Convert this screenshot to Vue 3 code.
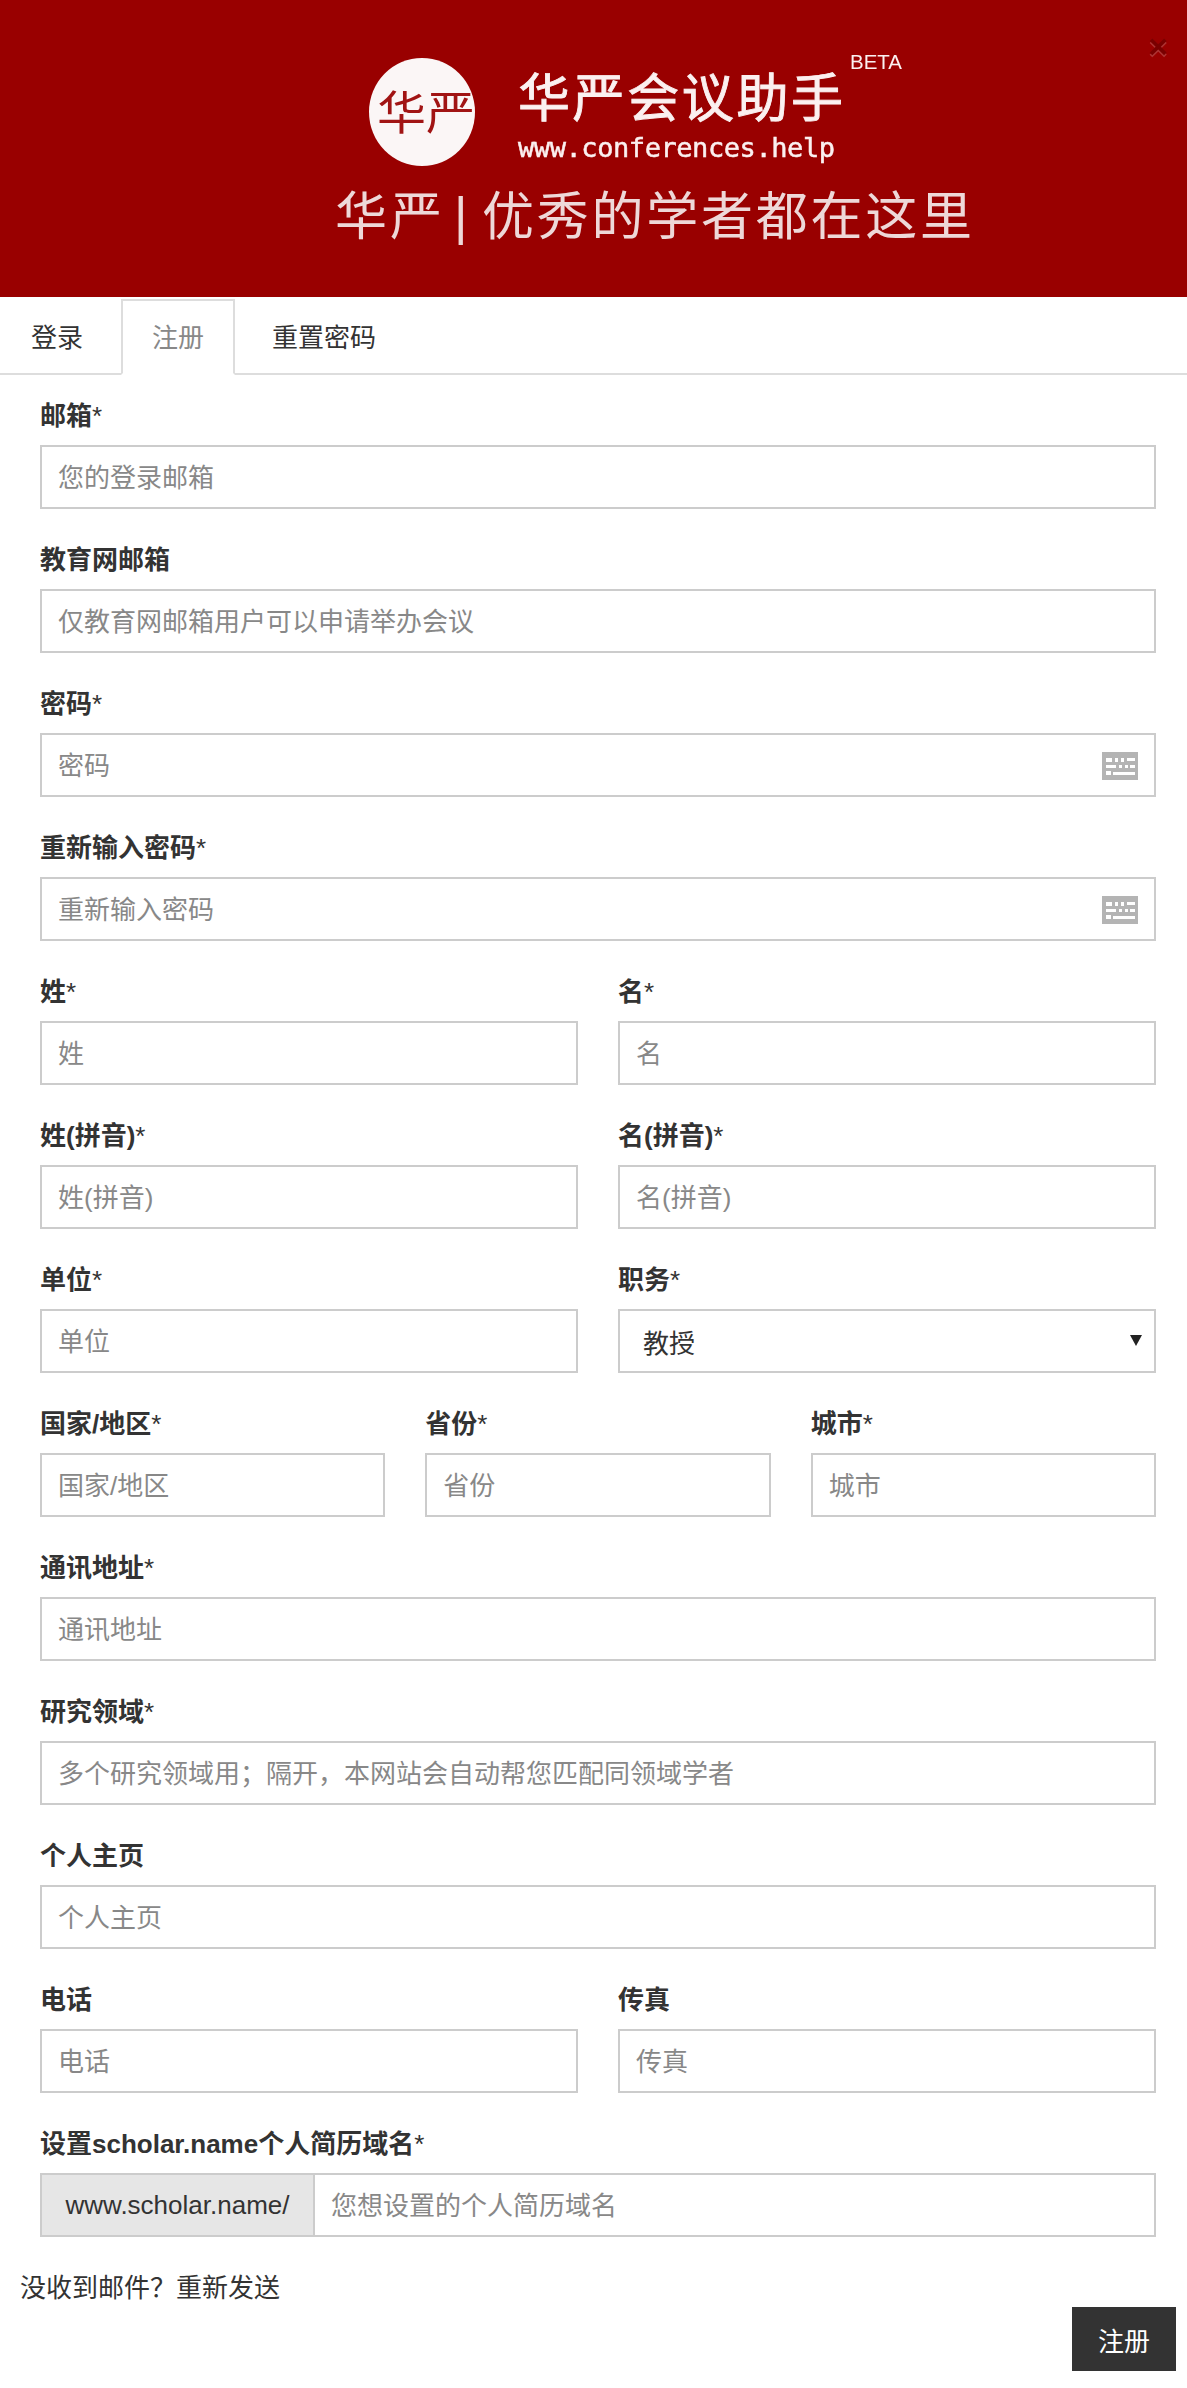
<script setup>
const fullRow = (label, placeholder) => ({ label, placeholder })
const rows = [
  [fullRow('邮箱*', '您的登录邮箱')],
  [fullRow('教育网邮箱', '仅教育网邮箱用户可以申请举办会议')],
  [{ label: '密码*', placeholder: '密码', key: true }],
  [{ label: '重新输入密码*', placeholder: '重新输入密码', key: true }],
  [fullRow('姓*', '姓'), fullRow('名*', '名')],
  [fullRow('姓(拼音)*', '姓(拼音)'), fullRow('名(拼音)*', '名(拼音)')],
  [fullRow('单位*', '单位'), { label: '职务*', select: ['教授', '副教授', '讲师', '研究员', '学生'] }],
  [fullRow('国家/地区*', '国家/地区'), fullRow('省份*', '省份'), fullRow('城市*', '城市')],
  [fullRow('通讯地址*', '通讯地址')],
  [fullRow('研究领域*', '多个研究领域用；隔开，本网站会自动帮您匹配同领域学者')],
  [fullRow('个人主页', '个人主页')],
  [fullRow('电话', '电话'), fullRow('传真', '传真')],
]
const bare = (label) => label.replace('*', '')
const required = (label) => label.endsWith('*')
</script>

<template>
  <div class="page">
    <header class="banner">
      <svg class="logo" viewBox="0 0 700 200" width="700" height="200" role="img" aria-label="华严会议助手">
        <ellipse cx="122" cy="55" rx="53" ry="54" fill="#fbf6f6" />
        <text x="77" y="72" class="seal" textLength="98" lengthAdjust="spacingAndGlyphs">华严</text>
        <text x="218" y="60" class="title" textLength="325" lengthAdjust="spacing">华严会议助手</text>
        <text x="218" y="100" class="url" textLength="317" lengthAdjust="spacing">www.conferences.help</text>
        <text x="550" y="12" class="beta" textLength="52" lengthAdjust="spacingAndGlyphs">BETA</text>
        <text x="35" y="178" class="slogan" textLength="107" lengthAdjust="spacing">华严</text>
        <text x="154" y="177" class="slogan">|</text>
        <text x="182" y="178" class="slogan" textLength="490" lengthAdjust="spacing">优秀的学者都在这里</text>
      </svg>
      <button class="close" type="button" aria-label="关闭">×</button>
    </header>

    <nav class="tabs">
      <a class="tab">登录</a>
      <a class="tab active">注册</a>
      <a class="tab">重置密码</a>
    </nav>

    <form class="form" @submit.prevent>
      <div v-for="(row, i) in rows" :key="i" class="row">
        <div v-for="field in row" :key="field.label" class="field">
          <label class="label">{{ bare(field.label) }}<span v-if="required(field.label)" class="req">*</span></label>
          <div v-if="field.select" class="control">
            <select class="input select">
              <option v-for="o in field.select" :key="o">{{ o }}</option>
            </select>
            <svg class="arrow" viewBox="0 0 12 12" width="12" height="12"><path d="M0 1h12L6 12z" fill="#222" /></svg>
          </div>
          <div v-else class="control">
            <input class="input" :type="field.key ? 'password' : 'text'" :placeholder="field.placeholder" />
            <svg v-if="field.key" class="kbd" viewBox="0 0 36 28" width="36" height="28">
              <rect width="36" height="28" fill="#b4b4b4" />
              <g fill="#fff">
                <rect x="4" y="6" width="6" height="4" />
                <rect x="13" y="6" width="3" height="4" />
                <rect x="19" y="6" width="3" height="4" />
                <rect x="25" y="6" width="8" height="3" />
                <rect x="4" y="13" width="10" height="3" />
                <rect x="17" y="13" width="3" height="3" />
                <rect x="23" y="13" width="3" height="3" />
                <rect x="28" y="13" width="5" height="3" />
                <rect x="4" y="19" width="5" height="4" />
                <rect x="11" y="20" width="22" height="3" />
              </g>
            </svg>
          </div>
        </div>
      </div>

      <div class="field">
        <label class="label">设置scholar.name个人简历域名<span class="req">*</span></label>
        <div class="group">
          <span class="addon">www.scholar.name/</span>
          <input class="input joined" type="text" placeholder="您想设置的个人简历域名" />
        </div>
      </div>
    </form>

    <p class="resend">没收到邮件？重新发送</p>
    <div class="actions">
      <button class="submit" type="button">注册</button>
    </div>
  </div>
</template>

<style>
html, body { background: #fff; }
</style>

<style scoped>
.page {
  width: 1187px;
  font-family: "Liberation Sans", "Noto Sans CJK SC", sans-serif;
  font-size: 26px;
  color: #333;
  background: #fff;
}
.banner {
  position: relative;
  height: 297px;
  background: #990000;
  display: flex;
  justify-content: center;
  padding-top: 57px;
  box-sizing: border-box;
}
.logo {
  display: block;
  margin-left: 112px;
  overflow: visible;
  filter: blur(0.6px);
}
.logo text { font-family: "Liberation Sans", "Noto Sans CJK SC", sans-serif; fill: #fbf0f0; }
.logo .seal { font-size: 46px; fill: #a11414; }
.logo .title { font-size: 52px; stroke: #fbf0f0; stroke-width: 0.9px; }
.logo .url { font-size: 27px; font-family: "DejaVu Sans Mono", "Liberation Mono", monospace; stroke: #fbf0f0; stroke-width: 0.5px; }
.logo .beta { font-size: 20px; }
.logo .slogan { font-size: 52px; fill: #eed8d8; }
.close {
  position: absolute;
  top: 26px;
  right: 19px;
  padding: 0;
  border: 0;
  background: none;
  font: 700 34px/40px "Liberation Sans", sans-serif;
  color: #000;
  text-shadow: 0 2px 0 #fff;
  opacity: 0.2;
}
.tabs {
  display: flex;
  height: 78px;
  padding-top: 2px;
  box-sizing: border-box;
  border-bottom: 2px solid #ddd;
}
.tab {
  height: 76px;
  line-height: 74px;
  padding: 0 29px;
  margin-right: 7px;
  border: 2px solid transparent;
  box-sizing: border-box;
  color: #333;
}
.tab.active {
  color: #888;
  background: #fff;
  border-color: #ddd #ddd #fff;
  margin-right: 6px;
}
.form {
  padding: 24px 31px 0 40px;
  display: flex;
  flex-direction: column;
  gap: 34px;
}
.row {
  display: flex;
  gap: 40px;
}
.field {
  flex: 1 1 0;
  min-width: 0;
}
.label {
  display: block;
  height: 36px;
  line-height: 34px;
  margin-bottom: 10px;
  font-weight: 700;
  color: #333;
}
.req {
  font-weight: 400;
}
.control {
  position: relative;
}
.input {
  display: block;
  width: 100%;
  height: 64px;
  padding: 2px 16px 0;
  border: 2px solid #ccc;
  border-radius: 0;
  background: #fff;
  box-sizing: border-box;
  font: inherit;
  color: #333;
  outline: none;
}
.input::placeholder {
  color: #888;
  opacity: 1;
}
.select {
  appearance: none;
  padding: 5px 16px 0 23px;
}
.arrow {
  position: absolute;
  right: 14px;
  top: 25px;
  pointer-events: none;
}
.kbd {
  position: absolute;
  right: 18px;
  top: 19px;
  pointer-events: none;
}
.group {
  display: flex;
  height: 64px;
}
.addon {
  flex: none;
  width: 275px;
  box-sizing: border-box;
  line-height: 60px;
  text-align: center;
  background: #e6e6e6;
  border: 2px solid #ccc;
}
.joined {
  flex: 1 1 0;
  min-width: 0;
  border-left: 0;
}
.resend {
  margin: 33px 0 0 20px;
  line-height: 36px;
}
.actions {
  display: flex;
  justify-content: flex-end;
  padding: 1px 11px 17px 0;
}
.submit {
  width: 104px;
  height: 64px;
  border: 0;
  background: #333;
  color: #fff;
  font: inherit;
}
</style>
